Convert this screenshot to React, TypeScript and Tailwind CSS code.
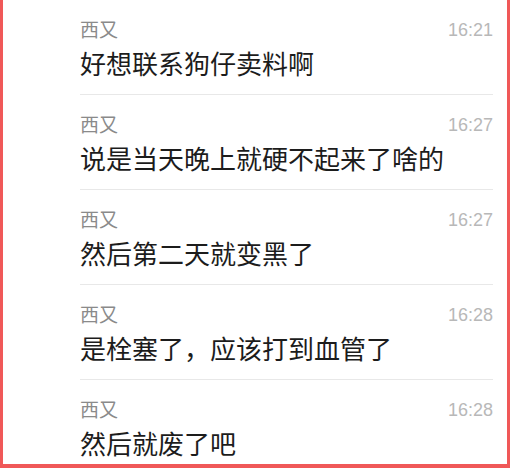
const messages = [
  { name: "西又", time: "16:21", text: "好想联系狗仔卖料啊" },
  { name: "西又", time: "16:27", text: "说是当天晚上就硬不起来了啥的" },
  { name: "西又", time: "16:27", text: "然后第二天就变黑了" },
  { name: "西又", time: "16:28", text: "是栓塞了，应该打到血管了" },
  { name: "西又", time: "16:28", text: "然后就废了吧" },
];

export default function App() {
  return (
    <div className="h-[468px] w-[510px] overflow-hidden border-x-[3px] border-b-4 border-[#f05858] bg-white">
      <div className="h-[464px] overflow-hidden pl-[77px] pr-[14px]">
        {messages.map((m, i) => (
          <div key={i} className="border-b border-[#e8e8e8] pt-[17px] pb-[15px]">
            <div className="flex h-[24px] items-center justify-between">
              <span
                className="text-[19px] leading-[24px] text-[#8a8a8a]"
                style={{ fontFamily: '"Noto Sans CJK SC", sans-serif' }}
              >
                {m.name}
              </span>
              <span
                className="pt-[1px] text-[18px] leading-[24px] text-[#b8b8b8]"
                style={{ fontFamily: '"Liberation Sans", Arial, sans-serif' }}
              >
                {m.time}
              </span>
            </div>
            <div
              className="mt-[6px] h-[32px] text-[26px] leading-[32px] text-[#1c1c1c]"
              style={{ fontFamily: '"Noto Sans CJK SC", sans-serif' }}
            >
              {m.text}
            </div>
          </div>
        ))}
      </div>
    </div>
  );
}
